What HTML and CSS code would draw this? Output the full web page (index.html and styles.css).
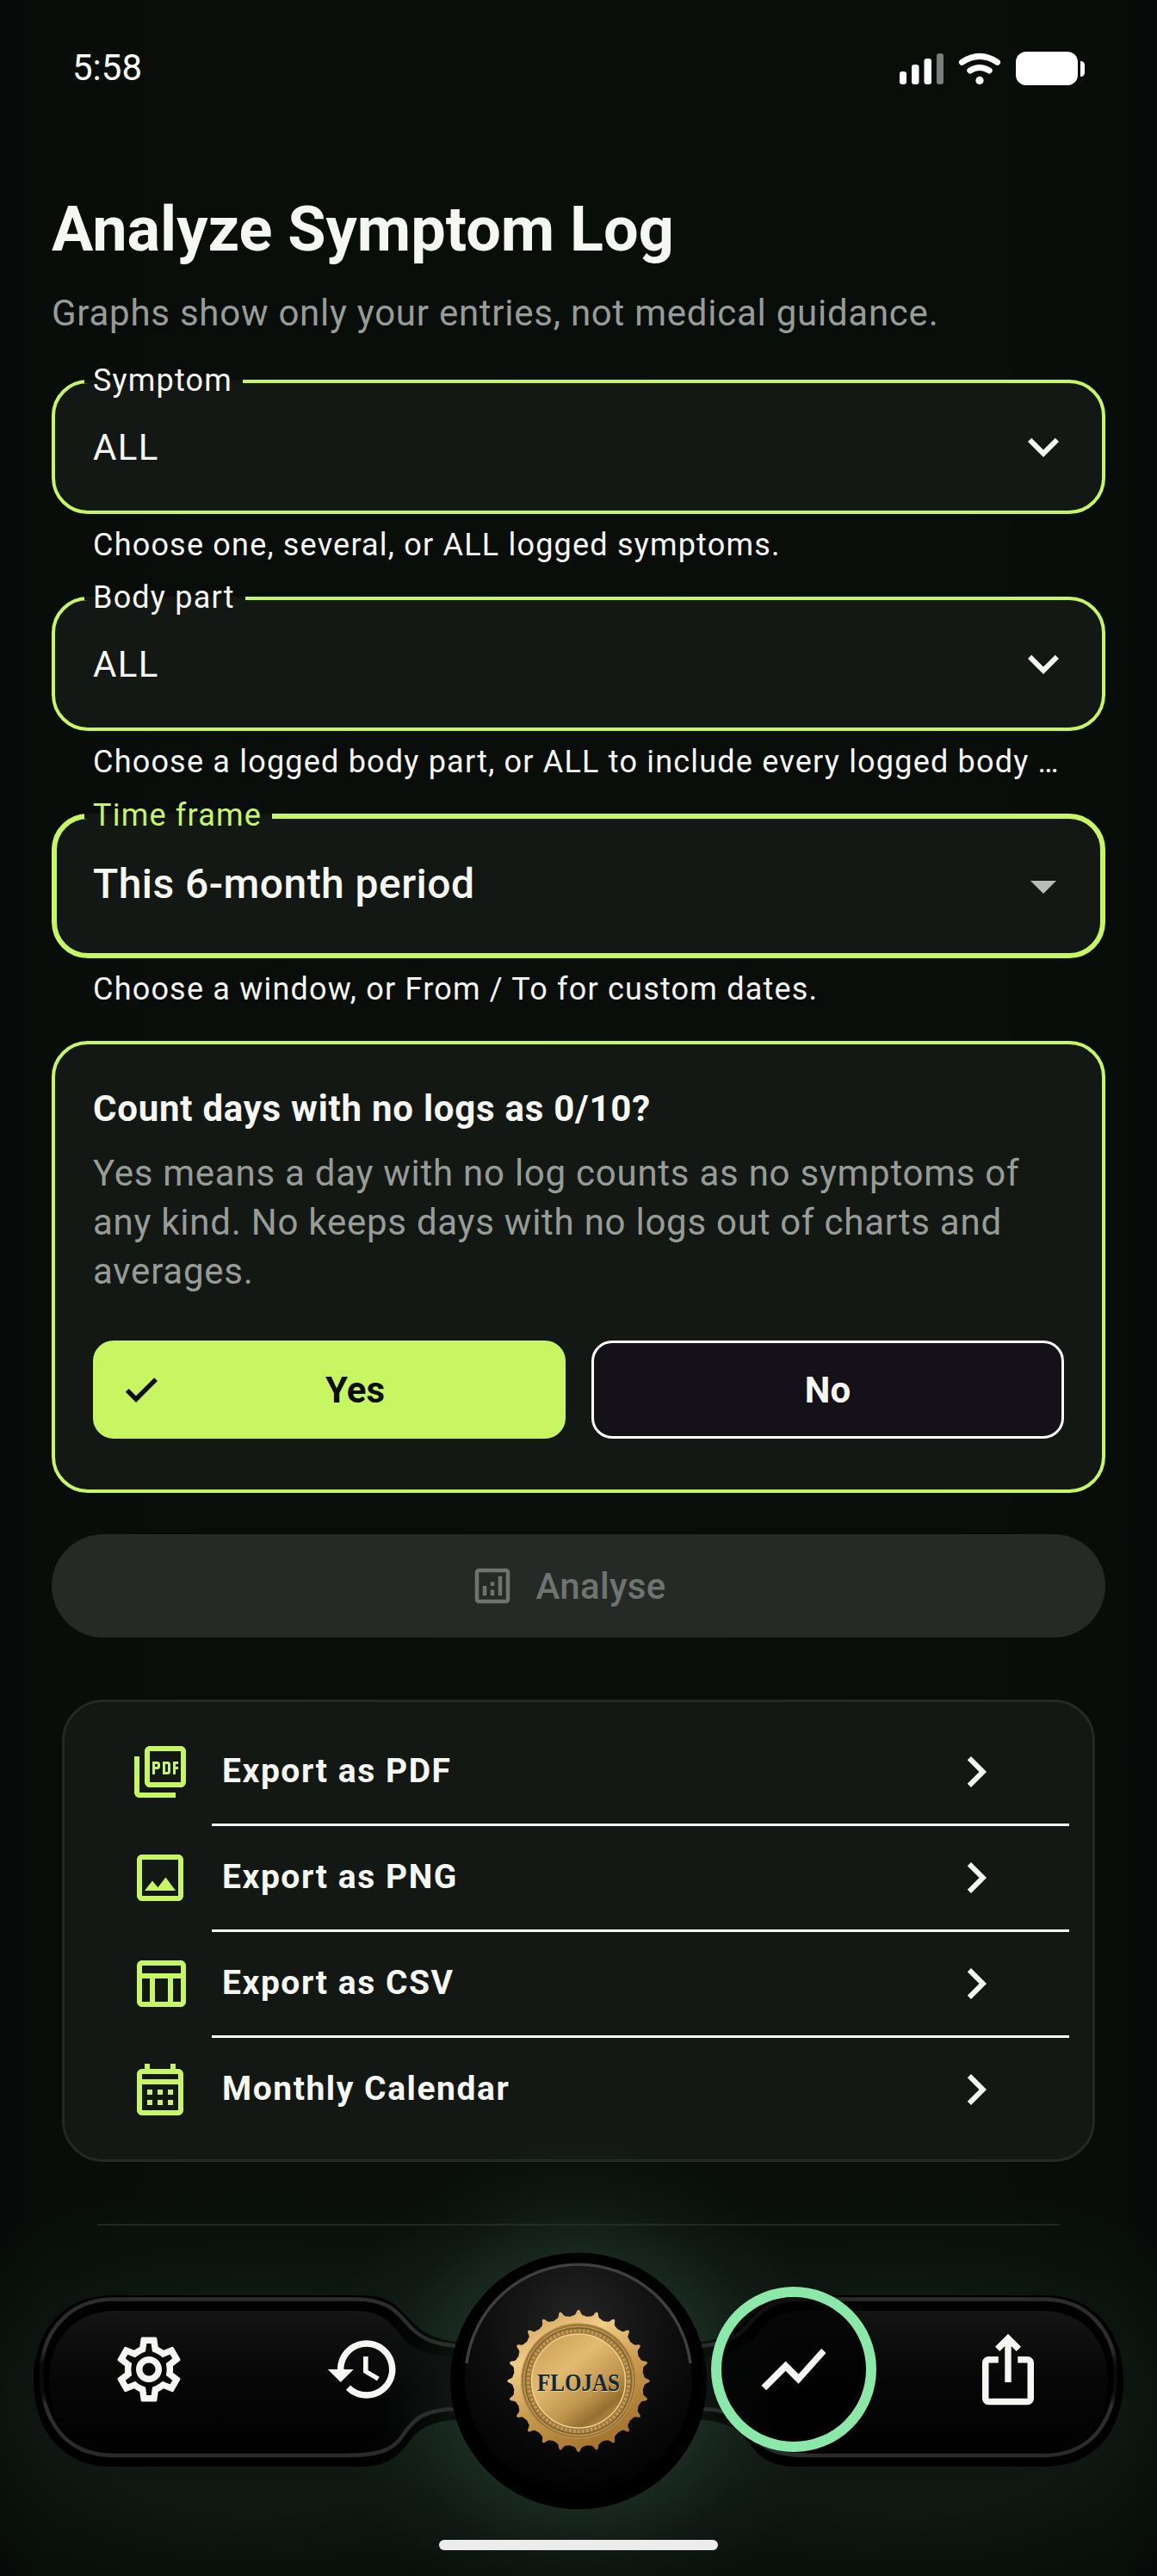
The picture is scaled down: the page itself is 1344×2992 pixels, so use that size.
FILE: index.html
```html
<!DOCTYPE html>
<html lang="en">
<head>
<meta charset="utf-8">
<title>Analyze Symptom Log</title>
<link rel="stylesheet" href="styles.css">
</head>
<body>
<div class="screen">
  <header class="status">
    <span class="status-time">5:58</span>
    <svg class="status-icons" viewBox="1044 58 217 41" width="217" height="41">
      <rect x="1045" y="82" width="8" height="15" rx="3"/>
      <rect x="1059" y="74" width="8.5" height="23" rx="3"/>
      <rect x="1073.5" y="67" width="8.5" height="30" rx="3"/>
      <rect x="1088" y="61" width="8" height="36" rx="3" fill="#7b7e7c"/>
      <path d="M1117.4 71.3Q1138 57.5 1158.6 71.3" fill="none" stroke="#fff" stroke-width="7" stroke-linecap="round"/>
      <path d="M1126.8 81Q1138 74 1149.2 81" fill="none" stroke="#fff" stroke-width="7" stroke-linecap="round"/>
      <circle cx="1138" cy="92.4" r="4.6"/>
      <rect x="1180" y="59" width="72" height="39" rx="12"/>
      <path d="M1255 70h1.500q3.500 1 3.500 5v8q0 4-3.500 5h-1.500z"/>
    </svg>
  </header>

  <main class="content">
    <h1 class="title">Analyze Symptom Log</h1>
    <p class="subtitle">Graphs show only your entries, not medical guidance.</p>

    <section class="field">
      <div class="field-box">
        <span class="field-label">Symptom</span>
        <span class="field-value">ALL</span>
        <svg class="icon" viewBox="0 0 24 24"><path d="M16.590 8.590L12 13.170 7.410 8.590 6 10l6 6 6-6z"/></svg>
      </div>
      <p class="helper">Choose one, several, or ALL logged symptoms.</p>
    </section>

    <section class="field">
      <div class="field-box">
        <span class="field-label">Body part</span>
        <span class="field-value">ALL</span>
        <svg class="icon" viewBox="0 0 24 24"><path d="M16.590 8.590L12 13.170 7.410 8.590 6 10l6 6 6-6z"/></svg>
      </div>
      <p class="helper">Choose a logged body part, or ALL to include every logged body …</p>
    </section>

    <section class="field">
      <div class="field-box field-box-focused">
        <span class="field-label">Time frame</span>
        <span class="field-value">This 6-month period</span>
        <svg class="icon" viewBox="0 0 24 24"><path d="M7 10l5 5 5-5z"/></svg>
      </div>
      <p class="helper">Choose a window, or From / To for custom dates.</p>
    </section>

    <section class="count-card">
      <h2 class="count-title">Count days with no logs as 0/10?</h2>
      <p class="count-text">Yes means a day with no log counts as no symptoms of<br>any kind. No keeps days with no logs out of charts and<br>averages.</p>
      <div class="choices">
        <button class="choice choice-on"><svg viewBox="0 0 24 24"><path d="M9 16.170L4.830 12l-1.420 1.410L9 19 21 7l-1.410-1.410z"/></svg><span>Yes</span></button>
        <button class="choice"><span>No</span></button>
      </div>
    </section>

    <button class="analyse" disabled>
      <svg viewBox="0 0 24 24"><path d="M19 3H5c-1.100 0-2 .9-2 2v14c0 1.100.9 2 2 2h14c1.100 0 2-.9 2-2V5c0-1.100-.9-2-2-2zm0 16H5V5h14v14zM7 12h2v5H7zM15 7h2v10h-2zM11 14h2v3h-2zM11 10h2v2h-2z"/></svg>
      <span>Analyse</span>
    </button>

    <ul class="exports">
      <li class="export">
        <svg class="icon lime" viewBox="0 0 24 24"><path d="M20 2H8c-1.100 0-2 .9-2 2v12c0 1.100.9 2 2 2h12c1.100 0 2-.9 2-2V4c0-1.100-.9-2-2-2zm0 14H8V4h12v12zM4 6H2v14c0 1.100.9 2 2 2h14v-2H4V6zm12 6V9c0-.55-.45-1-1-1h-2v5h2c.55 0 1-.45 1-1zm-2-3h1v3h-1V9zm4 2h1v-1h-1V9h1V8h-2v5h1zm-8 0h1c.55 0 1-.45 1-1V9c0-.55-.45-1-1-1H9v5h1v-2zm0-2h1v1h-1V9z"/></svg>
        <span class="export-name">Export as PDF</span>
        <svg class="icon" viewBox="0 0 24 24"><path d="M10 6L8.590 7.410 13.170 12l-4.580 4.590L10 18l6-6z"/></svg>
      </li>
      <li class="export">
        <svg class="icon lime" viewBox="0 0 24 24"><path d="M19 5v14H5V5h14m0-2H5c-1.100 0-2 .9-2 2v14c0 1.100.9 2 2 2h14c1.100 0 2-.9 2-2V5c0-1.100-.9-2-2-2zm-4.860 8.860l-3 3.870L9 13.140 6 17h12l-3.860-5.140z"/></svg>
        <span class="export-name">Export as PNG</span>
        <svg class="icon" viewBox="0 0 24 24"><path d="M10 6L8.590 7.410 13.170 12l-4.580 4.590L10 18l6-6z"/></svg>
      </li>
      <li class="export">
        <svg class="icon lime" viewBox="0 0 24 24"><path d="M20 3H5c-1.100 0-2 .9-2 2v14c0 1.100.9 2 2 2h15c1.100 0 2-.9 2-2V5c0-1.100-.9-2-2-2zm0 2v3H5V5h15zm-5 14h-5v-9h5v9zM5 10h3v9H5v-9zm12 9v-9h3v9h-3z"/></svg>
        <span class="export-name">Export as CSV</span>
        <svg class="icon" viewBox="0 0 24 24"><path d="M10 6L8.590 7.410 13.170 12l-4.580 4.590L10 18l6-6z"/></svg>
      </li>
      <li class="export">
        <svg class="icon lime" viewBox="0 0 24 24"><path d="M19 4h-1V2h-2v2H8V2H6v2H5c-1.110 0-1.990.9-1.990 2L3 20c0 1.100.89 2 2 2h14c1.100 0 2-.9 2-2V6c0-1.100-.9-2-2-2zm0 16H5V10h14v10zm0-12H5V6h14v2zM9 14H7v-2h2v2zm4 0h-2v-2h2v2zm4 0h-2v-2h2v2zm-8 4H7v-2h2v2zm4 0h-2v-2h2v2zm4 0h-2v-2h2v2z"/></svg>
        <span class="export-name">Monthly Calendar</span>
        <svg class="icon" viewBox="0 0 24 24"><path d="M10 6L8.590 7.410 13.170 12l-4.580 4.590L10 18l6-6z"/></svg>
      </li>
    </ul>
    <hr class="rule">
  </main>

  <nav class="dock">
    <svg class="dock-shape" viewBox="0 2480 1344 512" width="1344" height="512">
      <defs>
        <linearGradient id="body" gradientUnits="userSpaceOnUse" x1="440" y1="0" x2="904" y2="0">
          <stop offset="0" stop-color="#000"/><stop offset=".18" stop-color="#000" stop-opacity=".6"/><stop offset=".82" stop-color="#000" stop-opacity=".6"/><stop offset="1" stop-color="#000"/>
        </linearGradient>
        <linearGradient id="edge" gradientUnits="userSpaceOnUse" x1="0" y1="2668" x2="0" y2="2854">
          <stop offset="0" stop-color="#2c2c2c"/><stop offset=".33" stop-color="#2c2e2d"/><stop offset=".42" stop-color="#0b0b0b"/><stop offset=".6" stop-color="#0b0b0b"/><stop offset=".68" stop-color="#2c2e2d"/><stop offset="1" stop-color="#2a2a2a"/>
        </linearGradient>
        <linearGradient id="face" x1="0" y1="0" x2="0" y2="1">
          <stop offset="0" stop-color="#141414"/><stop offset=".5" stop-color="#060606"/><stop offset="1" stop-color="#010101"/>
        </linearGradient>
        <linearGradient id="neck" gradientUnits="userSpaceOnUse" x1="440" y1="0" x2="530" y2="0">
          <stop offset="0" stop-color="#0f1613" stop-opacity="0"/><stop offset="1" stop-color="#0f1613"/>
        </linearGradient>
        <radialGradient id="knob" cx=".5" cy=".25" r=".75">
          <stop offset="0" stop-color="#242424"/><stop offset=".55" stop-color="#0e0e0e"/><stop offset="1" stop-color="#010101"/>
        </radialGradient>
        <linearGradient id="gold" x1=".25" y1="0" x2=".75" y2="1">
          <stop offset="0" stop-color="#d3a258"/><stop offset=".25" stop-color="#f0cd86"/><stop offset=".55" stop-color="#c99a4c"/><stop offset="1" stop-color="#986a26"/>
        </linearGradient>
        <linearGradient id="disc" x1=".1" y1=".1" x2=".75" y2=".95">
          <stop offset="0" stop-color="#d0a35a"/><stop offset=".35" stop-color="#e3ba72"/><stop offset=".7" stop-color="#c0954e"/><stop offset=".9" stop-color="#94702f"/><stop offset="1" stop-color="#b28540"/>
        </linearGradient>
        <path id="tip" d="M-12 -72Q-8 -76 -6.500 -76Q-3.500 -76 -2 -81Q0 -84.500 2 -81Q3.500 -76 6.500 -76Q8 -76 12 -72z"/>
        <clipPath id="seal">
          <circle r="75.500"/>
          <use href="#tip"/><use href="#tip" transform="rotate(15)"/><use href="#tip" transform="rotate(30)"/><use href="#tip" transform="rotate(45)"/><use href="#tip" transform="rotate(60)"/><use href="#tip" transform="rotate(75)"/><use href="#tip" transform="rotate(90)"/><use href="#tip" transform="rotate(105)"/><use href="#tip" transform="rotate(120)"/><use href="#tip" transform="rotate(135)"/><use href="#tip" transform="rotate(150)"/><use href="#tip" transform="rotate(165)"/><use href="#tip" transform="rotate(180)"/><use href="#tip" transform="rotate(195)"/><use href="#tip" transform="rotate(210)"/><use href="#tip" transform="rotate(225)"/><use href="#tip" transform="rotate(240)"/><use href="#tip" transform="rotate(255)"/><use href="#tip" transform="rotate(270)"/><use href="#tip" transform="rotate(285)"/><use href="#tip" transform="rotate(300)"/><use href="#tip" transform="rotate(315)"/><use href="#tip" transform="rotate(330)"/><use href="#tip" transform="rotate(345)"/>
        </clipPath>
        <g id="wing">
          <path fill="url(#body)" d="M540 2721C508 2719 490 2710 476 2694C460 2676 450 2666 418 2666H130C70 2666 39 2712 39 2765C39 2820 70 2865 130 2865H418C446 2865 460 2856 472 2840C488 2818 504 2811 540 2810z"/>
          <path fill="url(#face)" d="M535 2738C504 2737 482 2730 470 2718C456 2700 446 2684 412 2684H134C82 2684 57 2722 57 2765C57 2812 82 2850 134 2850H400C440 2850 454 2845 464 2834C480 2810 490 2799 535 2797z"/>
          <path fill="url(#neck)" d="M535 2738C504 2737 482 2730 470 2718L440 2690V2845L464 2834C480 2810 490 2799 535 2797z"/>
          <path fill="none" stroke="url(#edge)" stroke-width="4.500" d="M540 2725.500C508 2724 492 2718 478 2704C462 2686 452 2670.500 412 2670.500H132C76 2670.500 46 2714 48 2762C50 2812 76 2852 132 2852H400C440 2852 453 2846 464 2834C482 2808 490 2798 540 2797.500"/>
        </g>
      </defs>
      <use href="#wing"/>
      <use href="#wing" transform="translate(1344 0) scale(-1 1)"/>
      <circle cx="672" cy="2765.500" r="149"/>
      <circle cx="672" cy="2764" r="132" fill="url(#knob)"/>
      <path d="M542 2745A131 131 0 0 1 802 2745" fill="none" stroke="#3f3f3f" stroke-width="3.500"/>
      <g transform="translate(672 2765.500)">
        <g clip-path="url(#seal)"><rect x="-85" y="-85" width="170" height="170" fill="url(#gold)"/></g>
        <circle r="67" fill="#9a743a"/>
        <circle r="66.500" fill="none" stroke="#c79a52"/>
        <circle r="63.500" fill="none" stroke="#c9a763"/>
        <circle r="58.500" fill="none" stroke="#c09a55" stroke-width="4" stroke-dasharray="3 2"/>
        <circle r="61.500" fill="none" stroke="#7d5c28"/>
        <circle r="54.500" fill="url(#disc)" stroke="#f0d491" stroke-width="1.500"/>
        <text class="seal-text seal-text-glow" x="0.500" y="12" text-anchor="middle" textLength="96" lengthAdjust="spacingAndGlyphs">FLOJAS</text>
        <text class="seal-text" x="0" y="11" text-anchor="middle" textLength="96" lengthAdjust="spacingAndGlyphs">FLOJAS</text>
      </g>
    </svg>
    <div class="dock-items">
      <svg class="dock-icon" viewBox="0 0 24 24"><path d="M19.430 12.980c.04-.32.07-.64.07-.98s-.03-.66-.07-.98l2.110-1.650c.19-.15.24-.42.12-.64l-2-3.460c-.09-.16-.26-.25-.44-.25-.06 0-.12.01-.17.03l-2.490 1c-.52-.4-1.080-.73-1.690-.98l-.38-2.650C14.460 2.180 14.250 2 14 2h-4c-.25 0-.46.18-.49.42l-.38 2.650c-.61.25-1.170.59-1.690.98l-2.490-1c-.06-.02-.12-.03-.18-.03-.17 0-.34.09-.43.25l-2 3.460c-.13.22-.07.49.12.64l2.110 1.650c-.04.32-.07.65-.07.98s.03.66.07.98l-2.110 1.650c-.19.15-.24.42-.12.64l2 3.460c.09.16.26.25.44.25.06 0 .12-.01.17-.03l2.490-1c.52.4 1.080.73 1.690.98l.38 2.650c.03.24.24.42.49.42h4c.25 0 .46-.18.49-.42l.38-2.650c.61-.25 1.170-.59 1.690-.98l2.490 1c.06.02.12.03.18.03.17 0 .34-.09.43-.25l2-3.460c.12-.22.07-.49-.12-.64l-2.110-1.650zm-1.980-1.710c.04.31.05.52.05.73 0 .21-.02.43-.05.73l-.14 1.130.89.7 1.080.84-.7 1.210-1.270-.51-1.040-.42-.9.68c-.43.32-.84.56-1.250.73l-1.060.43-.16 1.130-.2 1.350h-1.400l-.19-1.350-.16-1.130-1.060-.43c-.43-.18-.83-.41-1.230-.71l-.91-.7-1.060.43-1.270.51-.7-1.210 1.080-.84.89-.7-.14-1.130c-.03-.31-.05-.54-.05-.74s.02-.43.05-.73l.14-1.130-.89-.7-1.080-.84.7-1.210 1.270.51 1.040.42.9-.68c.43-.32.84-.56 1.250-.73l1.060-.43.16-1.130.2-1.350h1.390l.19 1.350.16 1.130 1.060.43c.43.18.83.41 1.230.71l.91.7 1.060-.43 1.270-.51.7 1.210-1.070.85-.89.7.14 1.130zM12 8c-2.210 0-4 1.790-4 4s1.790 4 4 4 4-1.790 4-4-1.790-4-4-4zm0 6c-1.100 0-2-.9-2-2s.9-2 2-2 2 .9 2 2-.9 2-2 2z"/></svg>
      <svg class="dock-icon" viewBox="0 0 24 24"><path d="M13 3c-4.970 0-9 4.030-9 9H1l3.890 3.890.07.14L9 12H6c0-3.870 3.130-7 7-7s7 3.130 7 7-3.130 7-7 7c-1.930 0-3.680-.79-4.940-2.060l-1.420 1.420C8.270 19.990 10.510 21 13 21c4.970 0 9-4.030 9-9s-4.030-9-9-9zm-1 5v5l4.280 2.540.72-1.210-3.500-2.080V8H12z"/></svg>
      <span class="dock-gap"></span>
      <span class="dock-active"><svg class="dock-icon" viewBox="0 0 24 24"><path d="M3.500 18.490l6-6.010 4 4L22 6.920l-1.410-1.410-7.090 7.970-4-4L2 16.990z"/></svg></span>
      <svg class="dock-icon" viewBox="0 0 24 24"><path d="M16 5l-1.420 1.420-1.590-1.590V16h-1.980V4.830L9.420 6.420 8 5l4-4 4 4zm4 5v11c0 1.100-.9 2-2 2H6c-1.110 0-2-.9-2-2V10c0-1.110.89-2 2-2h3v2H6v11h12V10h-3V8h3c1.100 0 2 .89 2 2z"/></svg>
    </div>
    <div class="home-bar"></div>
  </nav>
</div>
</body>
</html>
```

FILE: styles.css
```css
* { box-sizing: border-box; }

body {
  margin: 0;
  background: #080d0a;
  color: #f6f7f2;
  font-family: Roboto, "Liberation Sans", sans-serif;
}

h1, h2, p, ul { margin: 0; padding: 0; }
button { font: inherit; }
svg { display: block; fill: currentColor; }

.screen {
  position: relative;
  width: 1344px;
  height: 2992px;
  overflow: hidden;
  background: linear-gradient(90deg, #060a08, #080d0a 4%, #090e0b 50%, #080d0a 96%, #060a08);
}

.status {
  display: flex;
  justify-content: space-between;
  align-items: center;
  height: 158px;
  padding: 0 83px 0 84px;
  color: #fff;
}
.status-time { font-size: 42px; line-height: 48px; }

.content { padding: 67px 60px 0; }

.title { font-size: 72px; line-height: 84px; font-weight: 700; }
.subtitle {
  margin-top: 25px;
  font-size: 42px;
  line-height: 60px;
  letter-spacing: 0.75px;
  color: #989c98;
}

.field { padding-bottom: 36px; }
.subtitle + .field { margin-top: 47px; }
.field-box {
  position: relative;
  display: flex;
  align-items: center;
  justify-content: space-between;
  height: 156px;
  padding: 0 32px 0 44px;
  border: 4px solid #c8f663;
  border-radius: 42px;
  background: #141814;
}
.field-label {
  position: absolute;
  left: 34px;
  top: -4px;
  height: 4px;
  padding: 0 12px 0 10px;
  background: #121612;
  font-size: 36px;
  line-height: 2px;
  letter-spacing: 1.2px;
}
.field-value { padding-top: 2px; font-size: 42px; line-height: 60px; letter-spacing: 1.35px; }
.field-box-focused { height: 168px; padding: 0 30px 0 42px; border-width: 6px; }
.field-box-focused .field-label { left: 32px; top: -6px; height: 6px; line-height: 4px; color: #c8f663; }
.field-box-focused .field-value { padding: 0 0 4px; font-size: 48px; font-weight: 500; letter-spacing: 0.45px; }
.field-box-focused .icon { color: #b9bbb9; }
.helper {
  margin: 12px 0 0 48px;
  font-size: 36px;
  line-height: 48px;
  letter-spacing: 1.2px;
  white-space: nowrap;
}

.icon { width: 72px; height: 72px; }
.lime { color: #c8f663; }

.count-card {
  height: 525px;
  margin-top: 0;
  padding: 45px 44px 0;
  border: 4px solid #c8f663;
  border-radius: 42px;
  background: #141814;
}
.count-title { font-size: 42px; line-height: 60px; font-weight: 700; letter-spacing: 0.75px; }
.count-text {
  margin-top: 16px;
  font-size: 42px;
  line-height: 57px;
  letter-spacing: 0.75px;
  color: #989c98;
  white-space: nowrap;
}
.choices { display: flex; gap: 30px; margin-top: 52px; }
.choice {
  display: flex;
  flex: 1;
  align-items: center;
  height: 114px;
  padding: 0 29px;
  border: 3px solid #fff;
  border-radius: 24px;
  background: #151118;
  color: #f6f7f2;
  font-size: 42px;
  font-weight: 700;
}
.choice span { flex: 1; text-align: center; }
.choice svg { width: 48px; height: 48px; margin-right: 12px; stroke: #080d0a; stroke-width: 0.7px; }
.choice-on { border-color: #c8f663; background: #c8f663; color: #080d0a; }

.analyse {
  display: flex;
  align-items: center;
  justify-content: center;
  gap: 24px;
  width: 100%;
  height: 120px;
  margin-top: 48px;
  padding: 0 26px 0 0;
  border: 0;
  border-radius: 60px;
  background: #252a27;
  color: #6f7471;
  font-size: 42px;
  font-weight: 500;
  letter-spacing: 0.3px;
}
.analyse svg { width: 54px; height: 54px; }

.exports {
  height: 537px;
  margin: 72px 12px 0;
  padding: 21px 27px 21px 75px;
  border: 3px solid #242926;
  border-radius: 48px;
  background: #141814;
  list-style: none;
}
.export {
  display: flex;
  align-items: center;
  height: 123px;
  padding-bottom: 3px;
  background: linear-gradient(#fff, #fff) 96px 100% / calc(100% - 96px) 3px no-repeat;
}
.export:last-child { background: none; }
.export-name {
  flex: 1;
  padding: 0 0 3px 36px;
  font-size: 39px;
  line-height: 54px;
  font-weight: 700;
  letter-spacing: 1.55px;
}
.export .icon:last-child { margin-right: 72px; }

.rule { height: 2px; margin: 72px 53px 0; border: 0; background: #222724; }

.dock {
  position: absolute;
  left: 0;
  bottom: 0;
  width: 1344px;
  height: 512px;
  background:
    radial-gradient(circle at 672px 286px, #22382b 0, #22382b98 150px, #22382b30 215px, transparent 290px),
    radial-gradient(ellipse 480px 250px at 290px 310px, #132017c0, #13201780 50%, transparent),
    radial-gradient(ellipse 480px 250px at 1054px 310px, #132017c0, #13201780 50%, transparent);
}
.dock-shape { position: absolute; inset: 0; fill: #000; }
.seal-text { font: 700 29px "Liberation Serif", serif; fill: #10273b; }
.seal-text-glow { fill: #efd08a; }
.dock-items {
  position: relative;
  display: grid;
  grid-template-columns: repeat(5, 1fr);
  place-items: center;
  height: 192px;
  margin-top: 176px;
  padding: 0 48px;
}
.dock-icon { width: 90px; height: 90px; }
.dock-active {
  display: grid;
  place-items: center;
  width: 192px;
  height: 192px;
  border: 12px solid #8ae8a8;
  border-radius: 50%;
  background: #000000a0;
}
.home-bar {
  position: relative;
  width: 324px;
  height: 12px;
  margin: 102px auto 0;
  border-radius: 6px;
  background: #ececec;
}
```
